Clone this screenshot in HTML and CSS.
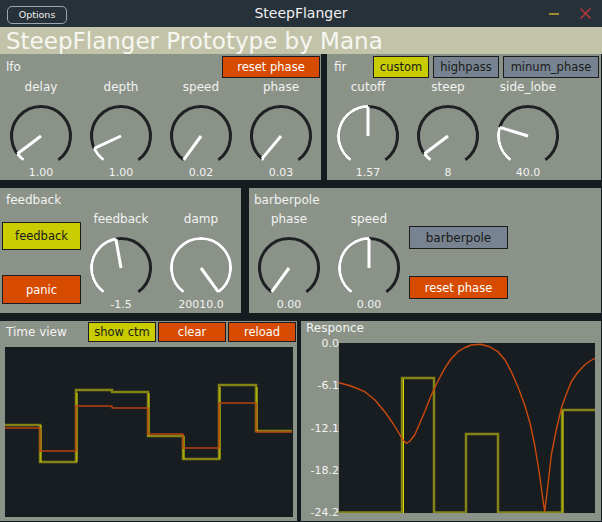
FILE: index.html
```html
<!DOCTYPE html>
<html>
<head>
<meta charset="utf-8">
<title>SteepFlanger</title>
<link rel="stylesheet" href="styles.css">
</head>
<body>
<div class="window">
  <div class="titlebar">
    <div class="tb-left"><button class="opt-btn">Options</button></div>
    <div class="tb-title">SteepFlanger</div>
    <div class="tb-right">
      <svg class="tb-min" width="10" height="4" viewBox="0 0 10 4"><line x1="0" y1="2" x2="10" y2="2"/></svg>
      <svg class="tb-close" width="11" height="11" viewBox="0 0 11 11"><line x1="0.5" y1="0.5" x2="10.5" y2="10.5"/><line x1="10.5" y1="0.5" x2="0.5" y2="10.5"/></svg>
    </div>
  </div>
  <div class="header">SteepFlanger Prototype by Mana</div>

  <div class="row row1">
    <section class="panel lfo">
      <div class="phead">
        <span class="ptitle">lfo</span>
        <button class="btn orange w98">reset phase</button>
      </div>
      <div class="knobs">
        <div class="knob">
          <div class="klabel">delay</div>
          <svg class="kdial" viewBox="0 0 80 72"><path class="track" d="M22.66 65.87A29.5 29.5 0 1 1 57.34 65.87"/><path class="val" d="M22.66 65.87A29.5 29.5 0 0 1 16.44 59.75"/><line class="ptr" x1="40" y1="42" x2="16.44" y2="59.75"/></svg>
          <div class="kval">1.00</div>
        </div>
        <div class="knob">
          <div class="klabel">depth</div>
          <svg class="kdial" viewBox="0 0 80 72"><path class="track" d="M22.66 65.87A29.5 29.5 0 1 1 57.34 65.87"/><path class="val" d="M22.66 65.87A29.5 29.5 0 0 1 13.26 54.47"/><line class="ptr" x1="40" y1="42" x2="13.26" y2="54.47"/></svg>
          <div class="kval">1.00</div>
        </div>
        <div class="knob">
          <div class="klabel">speed</div>
          <svg class="kdial" viewBox="0 0 80 72"><path class="track" d="M22.66 65.87A29.5 29.5 0 1 1 57.34 65.87"/><line class="ptr" x1="40" y1="42" x2="22.66" y2="65.87"/></svg>
          <div class="kval">0.02</div>
        </div>
        <div class="knob">
          <div class="klabel">phase</div>
          <svg class="kdial" viewBox="0 0 80 72"><path class="track" d="M22.66 65.87A29.5 29.5 0 1 1 57.34 65.87"/><path class="val" d="M22.66 65.87A29.5 29.5 0 0 1 21.04 64.6"/><line class="ptr" x1="40" y1="42" x2="21.04" y2="64.6"/></svg>
          <div class="kval">0.03</div>
        </div>
      </div>
    </section>

    <section class="panel fir">
      <div class="phead">
        <span class="ptitle">fir</span>
        <div class="btn-group">
          <button class="btn yellow w56">custom</button>
          <button class="btn slate w66">highpass</button>
          <button class="btn slate w96">minum_phase</button>
        </div>
      </div>
      <div class="knobs">
        <div class="knob">
          <div class="klabel">cutoff</div>
          <svg class="kdial" viewBox="0 0 80 72"><path class="track" d="M22.66 65.87A29.5 29.5 0 1 1 57.34 65.87"/><path class="val" d="M22.66 65.87A29.5 29.5 0 0 1 40 12.5"/><line class="ptr" x1="40" y1="42" x2="40" y2="12.5"/></svg>
          <div class="kval">1.57</div>
        </div>
        <div class="knob">
          <div class="klabel">steep</div>
          <svg class="kdial" viewBox="0 0 80 72"><path class="track" d="M22.66 65.87A29.5 29.5 0 1 1 57.34 65.87"/><path class="val" d="M22.66 65.87A29.5 29.5 0 0 1 16.44 59.75"/><line class="ptr" x1="40" y1="42" x2="16.44" y2="59.75"/></svg>
          <div class="kval">8</div>
        </div>
        <div class="knob">
          <div class="klabel">side_lobe</div>
          <svg class="kdial" viewBox="0 0 80 72"><path class="track" d="M22.66 65.87A29.5 29.5 0 1 1 57.34 65.87"/><path class="val" d="M22.66 65.87A29.5 29.5 0 0 1 11.79 33.37"/><line class="ptr" x1="40" y1="42" x2="11.79" y2="33.37"/></svg>
          <div class="kval">40.0</div>
        </div>
      </div>
    </section>
  </div>

  <div class="row row2">
    <section class="panel feedback">
      <div class="ptitle2">feedback</div>
      <div class="prow">
        <div class="bcol fbcol">
          <button class="btn yellow fb-btn">feedback</button>
          <button class="btn orange panic-btn">panic</button>
        </div>
        <div class="knob">
          <div class="klabel">feedback</div>
          <svg class="kdial" viewBox="0 0 80 72"><path class="track" d="M22.66 65.87A29.5 29.5 0 1 1 57.34 65.87"/><path class="val" d="M22.66 65.87A29.5 29.5 0 0 1 34.88 12.95"/><line class="ptr" x1="40" y1="42" x2="34.88" y2="12.95"/></svg>
          <div class="kval">-1.5</div>
        </div>
        <div class="knob">
          <div class="klabel">damp</div>
          <svg class="kdial" viewBox="0 0 80 72"><path class="track" d="M22.66 65.87A29.5 29.5 0 1 1 57.34 65.87"/><path class="val" d="M22.66 65.87A29.5 29.5 0 1 1 57.34 65.87"/><line class="ptr" x1="40" y1="42" x2="57.34" y2="65.87"/></svg>
          <div class="kval">20010.0</div>
        </div>
      </div>
    </section>

    <section class="panel barber">
      <div class="ptitle2">barberpole</div>
      <div class="prow">
        <div class="knob">
          <div class="klabel">phase</div>
          <svg class="kdial" viewBox="0 0 80 72"><path class="track" d="M22.66 65.87A29.5 29.5 0 1 1 57.34 65.87"/><line class="ptr" x1="40" y1="42" x2="22.66" y2="65.87"/></svg>
          <div class="kval">0.00</div>
        </div>
        <div class="knob">
          <div class="klabel">speed</div>
          <svg class="kdial" viewBox="0 0 80 72"><path class="track" d="M22.66 65.87A29.5 29.5 0 1 1 57.34 65.87"/><path class="val" d="M22.66 65.87A29.5 29.5 0 0 1 40 12.5"/><line class="ptr" x1="40" y1="42" x2="40" y2="12.5"/></svg>
          <div class="kval">0.00</div>
        </div>
        <div class="bcol bpcol">
          <button class="btn slate bp-btn">barberpole</button>
          <button class="btn orange bp-reset">reset phase</button>
        </div>
      </div>
    </section>
  </div>

  <div class="row row3">
    <section class="panel timeview">
      <div class="tv-head">
        <span class="ptitle">Time view</span>
        <div class="tv-btns">
          <button class="btn yellow tvb">show ctm</button>
          <button class="btn orange tvb">clear</button>
          <button class="btn orange tvb">reload</button>
        </div>
      </div>
      <svg class="tv-canvas" viewBox="0 0 288 170">
        <polyline class="olive" points="0,78 35,78 35,115 71,115 71,43 107,43 107,45 143,45 143,89 178,89 178,112 214,112 214,38 251,38 251,84 287,84"/>
        <g class="bright">
          <line x1="36" y1="78" x2="36" y2="115"/>
          <line x1="72" y1="46" x2="72" y2="115"/>
          <line x1="144" y1="46" x2="144" y2="89"/>
          <line x1="179" y1="89" x2="179" y2="112"/>
          <line x1="215" y1="40" x2="215" y2="112"/>
          <line x1="252" y1="40" x2="252" y2="84"/>
        </g>
        <polyline class="red" points="0,81 35,81 35,104 71,104 71,59 107,59 107,61 143,61 143,87 178,87 178,101 214,101 214,56 251,56 251,85 287,85"/>
      </svg>
    </section>

    <section class="panel response">
      <div class="ptitle3">Responce</div>
      <div class="plot">
        <div class="axis">
          <span>0.0</span>
          <span>-6.1</span>
          <span>-12.1</span>
          <span>-18.2</span>
          <span>-24.2</span>
        </div>
        <svg class="rs-canvas" viewBox="0 0 256 170">
          <polyline class="olive" points="0,169.5 63,169.5 63,35 95,35 95,169.5 127,169.5 127,91 159,91 159,169.5 223,169.5 223,67 256,67"/>
          <g class="bright">
            <line x1="64.5" y1="36" x2="64.5" y2="170"/>
            <line x1="224" y1="68" x2="224" y2="170"/>
          </g>
          <polyline class="red" points="0,39.7 12,43 25.7,48.7 36,57 45.7,68.7 53,79 59,88.7 64,97 67.3,100.3 71,98 75.7,92 80,82 85.7,68.7 92.3,52 99,38 105.7,25.3 112,16 119,8.7 126,4.5 132.3,2 141.7,1.3 150,3.5 159,8.7 166,17 172.3,28.7 179,44 185.7,62 191,80 195.7,102 200,128 203,150 205.7,168.7 208,150 212.3,112 217,88 222.3,65.3 227,52 232.3,38.7 239,29 245.7,22 251,18 256,15.3"/>
        </svg>
      </div>
    </section>
  </div>
</div>
</body>
</html>
```

FILE: styles.css
```css
* { box-sizing: border-box; }
html, body { margin: 0; padding: 0; }
body {
  width: 602px;
  height: 522px;
  overflow: hidden;
  background: #171c20;
  font-family: "DejaVu Sans", sans-serif;
  color: #f2f2f2;
}
.window {
  display: flex;
  flex-direction: column;
  width: 602px;
  height: 522px;
}

/* title bar */
.titlebar {
  flex: none;
  height: 27px;
  background: #27313a;
  display: grid;
  grid-template-columns: 1fr auto 1fr;
  align-items: start;
}
.opt-btn {
  margin: 6px 0 0 7px;
  width: 60px;
  height: 18px;
  padding: 0;
  border: 1px solid #9ea6ad;
  border-radius: 5px;
  background: transparent;
  color: #f0f0f0;
  font: 9.5px "DejaVu Sans", sans-serif;
  line-height: 16px;
}
.tb-title {
  font-size: 14px;
  line-height: 27px;
  color: #f0f0f0;
}
.tb-right {
  display: flex;
  justify-content: flex-end;
  align-items: center;
  height: 27px;
  gap: 21px;
  padding-right: 11px;
}
.tb-min { display: block; margin-top: 1px; }
.tb-min line { stroke: #a08a30; stroke-width: 2; }
.tb-close { display: block; }
.tb-close line { stroke: #b8383a; stroke-width: 1.5; }

/* header */
.header {
  flex: none;
  height: 27px;
  background: #c2c3a8;
  color: #f7f7f2;
  font-size: 23px;
  line-height: 25px;
  padding: 2px 0 0 6px;
  white-space: nowrap;
}

/* rows */
.row { display: grid; flex: none; }
.row1 { grid-template-columns: 321px 274px; column-gap: 6px; height: 126px; }
.row2 { grid-template-columns: 241px 352px; column-gap: 8px; height: 125px; margin-top: 8px; }
.row3 { grid-template-columns: 297px 300px; column-gap: 4px; height: 200px; margin-top: 8px; }

.panel { background: #8b9388; min-width: 0; }

/* buttons */
.btn {
  font-family: "DejaVu Sans", sans-serif;
  font-size: 11.5px;
  border: 1px solid #1b1d1e;
  padding: 0;
  margin: 0;
  height: 22px;
  white-space: nowrap;
}
.orange { background: #d64b00; color: #ffffff; }
.yellow { background: #c8cc00; color: #1a1a1a; }
.slate { background: #778390; color: #1a1a1a; }
.w98 { width: 98px; }
.w56 { width: 56px; }
.w66 { width: 66px; }
.w96 { width: 96px; }

/* panel heads */
.phead {
  display: flex;
  align-items: center;
  justify-content: space-between;
  height: 22px;
  margin-top: 2px;
  padding-left: 6px;
  padding-right: 1px;
}
.fir .phead { padding-left: 7px; padding-right: 2px; }
.btn-group { display: flex; gap: 4px; }
.ptitle { font-size: 12px; }
.ptitle2 {
  font-size: 12px;
  line-height: 14px;
  height: 14px;
  margin-top: 5px;
  padding-left: 6px;
}
.barber .ptitle2 { padding-left: 5px; }

/* knobs */
.knobs { display: flex; margin-top: 2px; padding-left: 1px; }
.knob {
  width: 80px;
  flex: none;
  display: flex;
  flex-direction: column;
  align-items: center;
}
.klabel { height: 14px; line-height: 14px; font-size: 12px; }
.kdial { display: block; width: 80px; height: 72px; }
.kval { height: 14px; line-height: 14px; font-size: 11px; }
.track { fill: none; stroke: #1e2124; stroke-width: 3; }
.val { fill: none; stroke: #ffffff; stroke-width: 3; }
.ptr { stroke: #ffffff; stroke-width: 3; }

/* feedback / barberpole rows */
.prow { display: flex; margin-top: 5px; }
.bcol { display: flex; flex-direction: column; flex: none; }
.fbcol { width: 81px; padding-left: 2px; }
.fb-btn { width: 79px; height: 28px; margin-top: 10px; }
.panic-btn { width: 79px; height: 29px; margin-top: 25px; }
.bpcol { width: 99px; }
.bp-btn { width: 99px; height: 23px; margin-top: 14px; font-size: 12px; }
.bp-reset { width: 99px; height: 23px; margin-top: 27px; }

/* time view */
.tv-head {
  display: flex;
  align-items: center;
  height: 20px;
  margin-top: 1px;
  padding-left: 6px;
  padding-right: 1px;
}
.tv-btns { display: flex; gap: 2px; margin-left: auto; }
.tvb { width: 68px; height: 20px; }
.tv-canvas {
  display: block;
  width: 288px;
  height: 170px;
  margin: 5px 0 0 5px;
  background: #181d21;
}
.olive { fill: none; stroke: #838316; stroke-width: 2.5; stroke-linejoin: miter; }
.bright line { stroke: #d8d800; stroke-width: 1; }
.red { fill: none; stroke: #b8420e; stroke-width: 1.4; stroke-linejoin: round; }
.response .red { stroke: #cc4a0c; }

/* response */
.ptitle3 {
  font-size: 12px;
  line-height: 14px;
  height: 14px;
  padding-left: 5px;
}
.plot {
  display: grid;
  grid-template-columns: 38px 256px;
  align-items: start;
  margin-top: 8px;
}
.axis {
  display: flex;
  flex-direction: column;
  justify-content: space-between;
  align-items: flex-end;
  height: 181px;
  margin-top: -5px;
  font-size: 11px;
  line-height: 12px;
  color: #f2f2f2;
}
.rs-canvas {
  display: block;
  width: 256px;
  height: 170px;
  background: #181d21;
}
```
